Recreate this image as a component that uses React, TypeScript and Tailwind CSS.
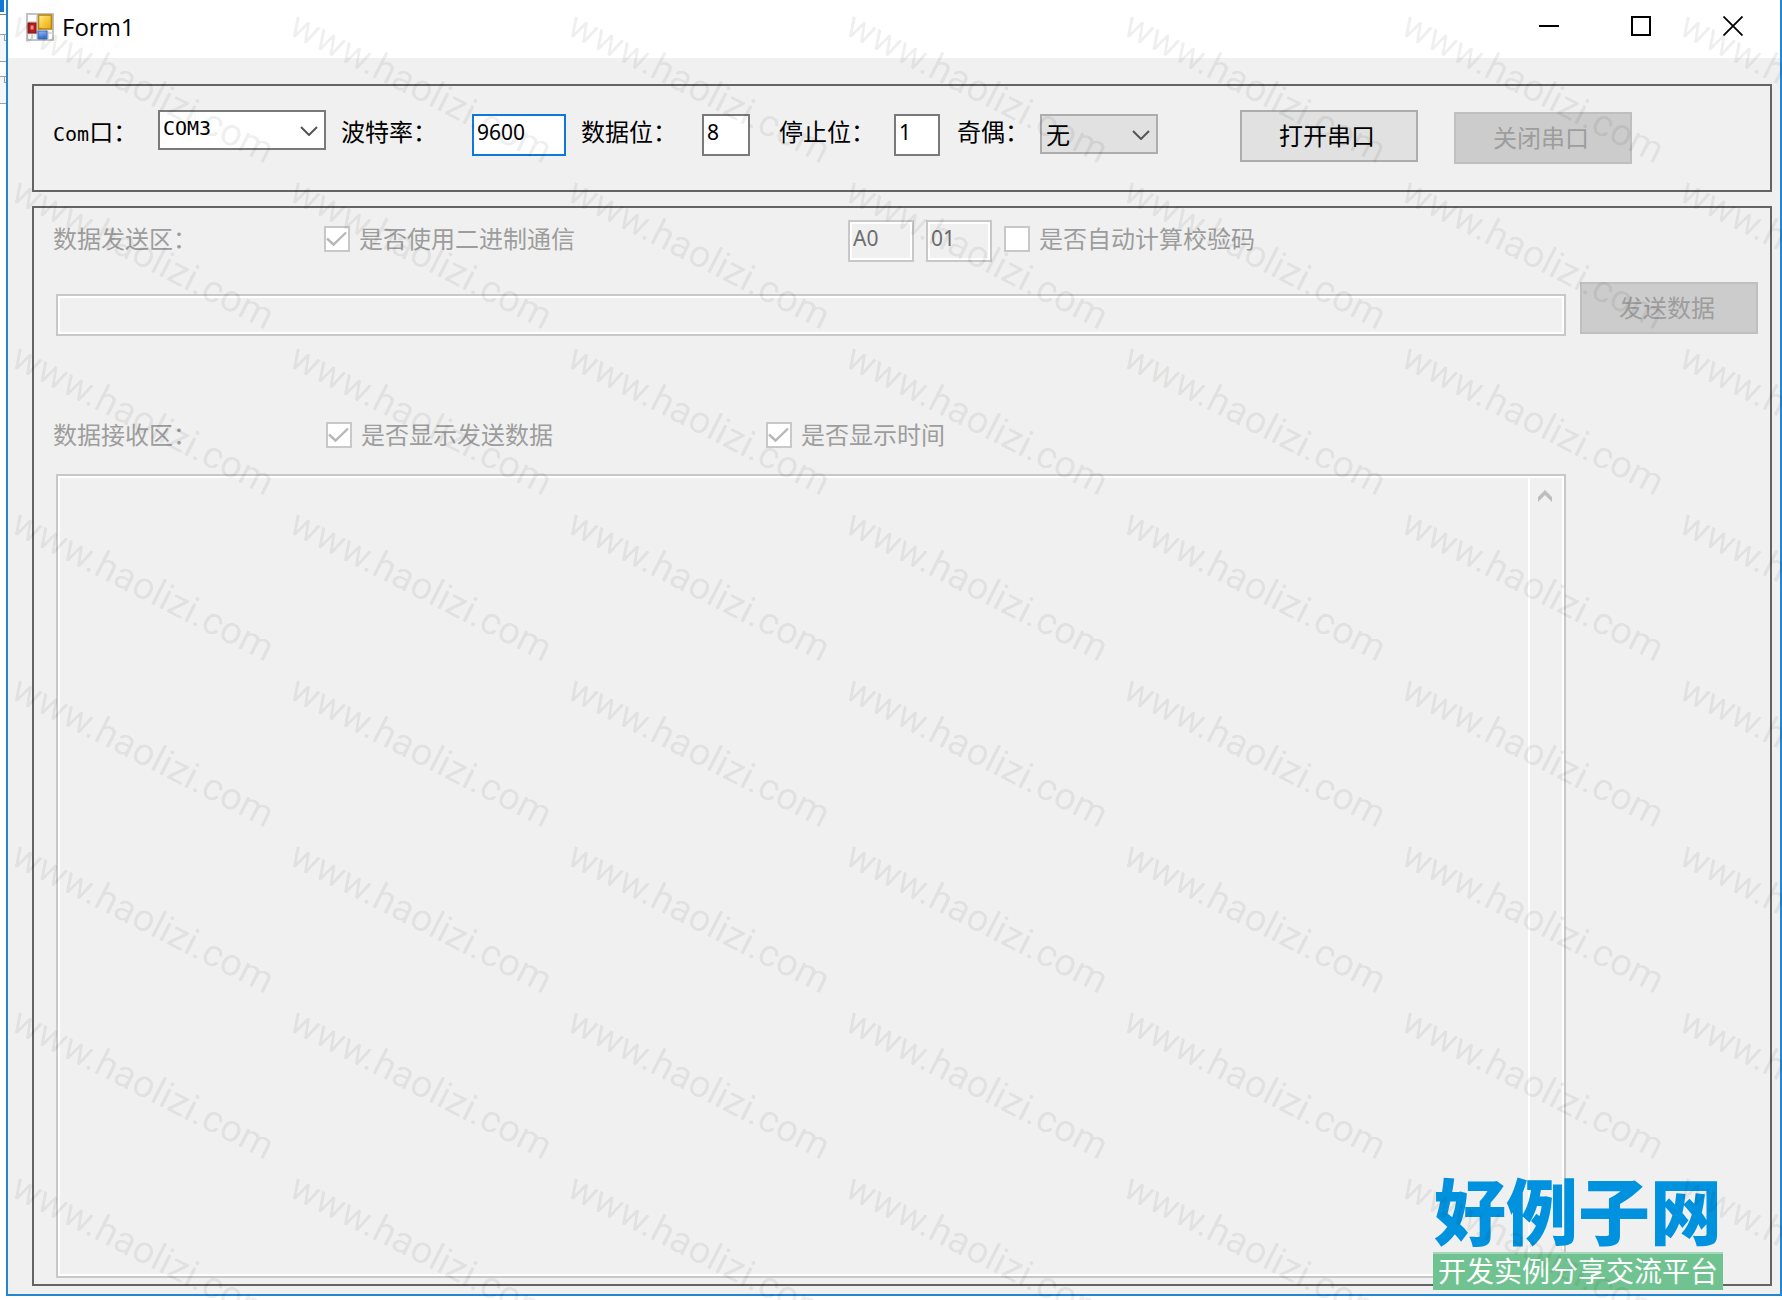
import type { ReactNode } from 'react';

const CJK = "font-['Noto_Sans_CJK_SC',sans-serif]";
const FIELD_TEXT = "font-['Noto_Sans','Noto_Sans_CJK_SC',sans-serif] text-[21px] leading-7";
const DISABLED_FRAME = 'border-2 border-[#c8c8c8] shadow-[inset_0_0_0_2px_#fff] bg-[#f0f0f0]';
const BUTTON = 'h-[52px] w-[178px] shrink-0 border-2 pr-1 pb-0.5 text-2xl leading-6';
const COLON = '\uFF1A';

function AppIcon() {
  return (
    <svg className="size-7 shrink-0" viewBox="0 0 28 28" aria-hidden="true">
      <defs>
        <linearGradient id="gold" x1="0" y1="0" x2="1" y2="1">
          <stop offset="0" stopColor="#fff0a0" />
          <stop offset="0.5" stopColor="#f8c840" />
          <stop offset="1" stopColor="#e8a818" />
        </linearGradient>
        <linearGradient id="blue" x1="0" y1="0" x2="0" y2="1">
          <stop offset="0" stopColor="#8fb8f8" />
          <stop offset="1" stopColor="#2e66cc" />
        </linearGradient>
      </defs>
      <rect x="1" y="1" width="26" height="26" fill="#fff" stroke="#c2c2c2" strokeWidth="2" />
      <path d="M11 1V27M1 9H11M1 20H27M6 20V27M22 18V27" stroke="#cfcfcf" strokeWidth="1.6" />
      <rect x="12.5" y="2" width="13" height="14" fill="url(#gold)" stroke="#b88810" strokeWidth="1.6" />
      <rect x="2" y="10" width="8" height="10" fill="#b81c1c" stroke="#8c1818" />
      <rect x="4.5" y="12.5" width="3" height="4" fill="#ee9090" />
      <rect x="12" y="18" width="9" height="8" fill="url(#blue)" stroke="#3f6cc0" />
    </svg>
  );
}

function Chevron({ className }: { className: string }) {
  return (
    <svg
      className={`pointer-events-none absolute h-2.5 w-4.5 ${className}`}
      viewBox="0 0 18 10"
      fill="none"
      stroke="#555"
      strokeWidth="2"
      aria-hidden="true"
    >
      <path d="M1 1L9 9L17 1" />
    </svg>
  );
}

function CheckField({ id, checked, children }: { id: string; checked?: boolean; children: ReactNode }) {
  return (
    <div className="flex shrink-0">
      <span className="relative mt-1.5 size-6.5">
        <input
          id={id}
          type="checkbox"
          disabled
          defaultChecked={checked}
          className="block size-6.5 appearance-none border-2 border-[#c8c8c8] bg-white"
        />
        {checked && (
          <svg
            className="pointer-events-none absolute inset-0 size-6.5"
            viewBox="0 0 26 26"
            fill="none"
            stroke="#b8b8b8"
            strokeWidth="2.4"
            aria-hidden="true"
          >
            <path d="M3 12.5L9.5 18.5L22 6.5" />
          </svg>
        )}
      </span>
      <label htmlFor={id} className="ml-[9px] whitespace-nowrap text-2xl leading-9 text-[#9d9d9d]">
        {children}
      </label>
    </div>
  );
}

function Watermark() {
  return (
    <div
      aria-hidden="true"
      className="pointer-events-none absolute inset-0 grid grid-cols-[repeat(7,278px)] auto-rows-[166px] overflow-hidden font-['Roboto',sans-serif] text-[38px] leading-10 text-black/8"
    >
      {Array.from({ length: 56 }, (_, i) => (
        <span key={i} className="origin-top-left translate-x-6 translate-y-1 rotate-27 whitespace-nowrap">
          www.haolizi.com
        </span>
      ))}
    </div>
  );
}

function BackdropEdge() {
  return (
    <div aria-hidden="true" className="flex w-1.5 shrink-0 flex-col bg-white">
      <div className="h-3 w-1 bg-[#1079d7]" />
      <div className="mt-0.5 h-5 border-t border-[#808080]" />
      <div className="h-7 border-y border-[#a0a0a0] bg-[#f5f6f8]">
        <div className="ml-1 h-1.5 border-b border-l border-[#a0a0a0] bg-white" />
      </div>
      <div className="mt-3.5 h-7 border-y border-[#a0a0a0] bg-[#f5f6f8]">
        <div className="ml-1 h-1.5 border-b border-l border-[#a0a0a0] bg-white" />
      </div>
    </div>
  );
}

function SiteLogo() {
  return (
    <div className="pointer-events-none absolute right-[59px] bottom-2.5 text-center whitespace-nowrap">
      <div className="pb-1.5 text-7xl leading-[76px] font-black text-[#0092df]">好例子网</div>
      <div className="h-9.5 border-t-2 border-[#a5d8ba] bg-[#70c391] px-[5px] text-[28px] leading-8 text-white">
        开发实例分享交流平台
      </div>
    </div>
  );
}

export default function App() {
  const label = 'shrink-0 whitespace-nowrap text-2xl leading-[42px] text-black';
  const field = `mt-1 h-10.5 shrink-0 border-2 bg-white pb-1.5 pl-[3px] outline-none ${FIELD_TEXT}`;
  const disabledField = `h-10.5 w-16.5 shrink-0 pb-1.5 pl-[3px] text-[#6d6d6d] ${DISABLED_FRAME} ${FIELD_TEXT}`;
  return (
    <div className={`relative flex min-h-screen bg-white pb-1 ${CJK}`}>
      <BackdropEdge />
      <main className="flex min-w-0 flex-1 flex-col border-x-2 border-b-2 border-[#2286d6] bg-[#f0f0f0]">
        <header className="flex h-[58px] items-center bg-white pl-4.5">
          <div className="pb-1">
            <AppIcon />
          </div>
          <h1 className="ml-2 flex-1 pb-1 font-['Open_Sans',sans-serif] text-2xl">Form1</h1>
          <div className="flex pr-px pb-1.5">
            <button aria-label="最小化" className="grid h-10 w-[92px] place-items-center">
              <svg className="size-5" viewBox="0 0 20 20" stroke="#000" strokeWidth="2">
                <path d="M0 10H20" />
              </svg>
            </button>
            <button aria-label="最大化" className="grid h-10 w-[92px] place-items-center">
              <svg className="size-5" viewBox="0 0 20 20" stroke="#000" strokeWidth="2" fill="none">
                <rect x="1" y="1" width="18" height="18" />
              </svg>
            </button>
            <button aria-label="关闭" className="grid h-10 w-[92px] place-items-center">
              <svg className="size-5" viewBox="0 0 20 20" stroke="#000" strokeWidth="1.8">
                <path d="M0.5 0.5L19.5 19.5M19.5 0.5L0.5 19.5" />
              </svg>
            </button>
          </div>
        </header>

        <div className="flex flex-1 flex-col gap-3.5 pt-6.5 pr-2 pb-2 pl-6">
          <section aria-label="串口设置" className="flex h-27 items-start border-2 border-[#646464] px-[19px] pt-6">
            <label htmlFor="port" className={`w-[105px] ${label}`}>
              <span className="font-['DejaVu_Sans_Mono',monospace] text-xl">Com</span>口{COLON}
            </label>
            <div className="relative shrink-0">
              <select
                id="port"
                className="block h-10 w-42 appearance-none border-2 border-[#7a7a7a] bg-white pb-1 pl-[3px] font-['DejaVu_Sans_Mono',monospace] text-xl leading-7"
              >
                <option>COM3</option>
              </select>
              <Chevron className="top-4 right-2" />
            </div>
            <label htmlFor="baud" className={`ml-[15px] w-[131px] ${label}`}>波特率{COLON}</label>
            <input id="baud" defaultValue="9600" className={`w-[94px] border-[#1079d7] ${field}`} />
            <label htmlFor="bits" className={`ml-[15px] w-[121px] ${label}`}>数据位{COLON}</label>
            <input id="bits" defaultValue="8" className={`w-12 border-[#7a7a7a] ${field}`} />
            <label htmlFor="stop" className={`ml-[29px] w-[115px] ${label}`}>停止位{COLON}</label>
            <input id="stop" defaultValue="1" className={`w-[46px] border-[#7a7a7a] ${field}`} />
            <label htmlFor="parity" className={`ml-[17px] w-[83px] ${label}`}>奇偶{COLON}</label>
            <div className="relative mt-1 shrink-0">
              <select
                id="parity"
                className="block h-10 w-[118px] appearance-none border-2 border-[#adadad] bg-[#e1e1e1] pl-1 text-2xl leading-9"
              >
                <option>无</option>
              </select>
              <Chevron className="top-4 right-2" />
            </div>
            <button className={`ml-[82px] border-[#adadad] bg-[#e1e1e1] text-black ${BUTTON}`}>打开串口</button>
            <button disabled className={`mt-0.5 ml-9 border-[#bfbfbf] bg-[#ccc] text-[#9d9d9d] ${BUTTON}`}>
              关闭串口
            </button>
          </section>

          <section aria-label="数据收发" className="flex flex-1 flex-col border-2 border-[#646464] pt-3 pb-1.5">
            <div className="flex h-10.5 items-start pl-[19px]">
              <h2 className="w-[271px] shrink-0 text-2xl leading-9 text-[#9d9d9d]">数据发送区{COLON}</h2>
              <div className="w-[524px] shrink-0">
                <CheckField id="binary" checked>是否使用二进制通信</CheckField>
              </div>
              <input aria-label="帧头" disabled defaultValue="A0" className={disabledField} />
              <input aria-label="地址" disabled defaultValue="01" className={`mx-3 ${disabledField}`} />
              <CheckField id="checksum">是否自动计算校验码</CheckField>
            </div>

            <div className="mt-5 flex items-start gap-3.5 pr-3 pl-5.5">
              <input
                aria-label="发送内容"
                disabled
                className={`mt-3 h-10.5 min-w-0 flex-1 px-2 ${DISABLED_FRAME} ${FIELD_TEXT}`}
              />
              <button disabled className={`border-[#bfbfbf] bg-[#ccc] text-[#9d9d9d] ${BUTTON}`}>发送数据</button>
            </div>

            <div className="mt-20 flex items-start pl-[19px]">
              <h2 className="w-[273px] shrink-0 text-2xl leading-9 text-[#9d9d9d]">数据接收区{COLON}</h2>
              <div className="w-[440px] shrink-0">
                <CheckField id="show-sent" checked>是否显示发送数据</CheckField>
              </div>
              <CheckField id="show-time" checked>是否显示时间</CheckField>
            </div>

            <div className="mt-5.5 mr-51 ml-5.5 flex min-h-60 flex-1 border-2 border-[#c8c8c8]">
              <div className="flex flex-1 border-2 border-white">
                <textarea aria-label="接收内容" disabled className={`flex-1 resize-none bg-[#f0f0f0] ${FIELD_TEXT}`} />
                <div className="w-8.5 border-l-2 border-white pt-3 pl-2">
                  <svg className="h-3 w-3.5" viewBox="0 0 14 12" fill="#bdbdbd" aria-hidden="true">
                    <path d="M7 0L14 7V12L7 5L0 12V7Z" />
                  </svg>
                </div>
              </div>
            </div>
          </section>
        </div>
      </main>
      <SiteLogo />
      <Watermark />
    </div>
  );
}
